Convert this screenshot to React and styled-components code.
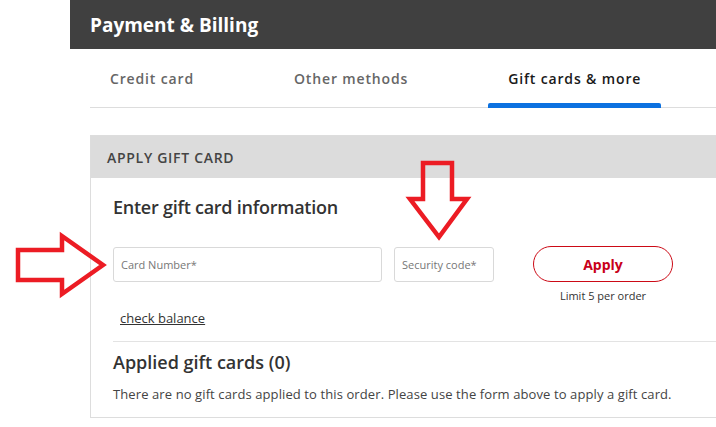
import styled, { createGlobalStyle } from "styled-components";

const GlobalStyle = createGlobalStyle`
  html, body {
    margin: 0;
    padding: 0;
    background: #ffffff;
    overflow: hidden;
  }
  body {
    font-family: "Open Sans", "Noto Sans", sans-serif;
    color: #333333;
  }
`;

const Page = styled.div`
  position: relative;
  padding-left: 70px;
  width: 646px;
  overflow: hidden;
`;

const Header = styled.header`
  height: 49px;
  background: #404040;
  display: flex;
  align-items: center;
  padding-left: 20px;
`;

const Title = styled.h1`
  margin: 0;
  font-size: 19px;
  font-weight: 700;
  color: #ffffff;
`;

const Main = styled.main`
  padding-left: 20px;
`;

const Tabs = styled.nav`
  display: flex;
  gap: 60px;
  height: 58px;
  border-bottom: 1px solid #dddddd;
`;

const Tab = styled.div`
  display: flex;
  align-items: center;
  justify-content: center;
  padding: 0 20px;
  font-size: 14px;
  font-weight: 600;
  letter-spacing: 0.85px;
  color: ${(p) => (p.$active ? "#1a1a1a" : "#666666")};
  position: relative;

  &::after {
    content: "";
    display: ${(p) => (p.$active ? "block" : "none")};
    position: absolute;
    left: 0;
    right: 0;
    bottom: -1px;
    height: 5px;
    border-radius: 2px 2px 0 0;
    background: #0c71e0;
  }
`;

const Panel = styled.section`
  margin-top: 27px;
  border: 1px solid #dddddd;
  width: 680px;
`;

const PanelHeader = styled.div`
  height: 42px;
  background: #dcdcdc;
  display: flex;
  align-items: center;
  padding-left: 16px;
  font-size: 14px;
  font-weight: 600;
  letter-spacing: 0.7px;
  color: #444444;
`;

const PanelBody = styled.div`
  padding: 17px 0 14px 22px;
`;

const Heading = styled.h2`
  margin: 0;
  font-size: 18px;
  font-weight: 600;
  color: #333333;
  line-height: 24px;
  letter-spacing: -0.25px;
`;

const FormRow = styled.div`
  display: flex;
  align-items: flex-start;
  margin-top: 28px;
`;

const Input = styled.input`
  box-sizing: border-box;
  width: ${(p) => p.$width}px;
  height: 35px;
  margin-right: 12px;
  border: 1px solid #d9d9d9;
  border-radius: 3px;
  padding: 0 7px;
  font-family: inherit;
  font-size: 11px;
  color: #333333;
  outline: none;

  &::placeholder {
    color: #777777;
  }
`;

const ApplyGroup = styled.div`
  display: flex;
  flex-direction: column;
  align-items: center;
  margin-left: 27px;
  margin-top: -1px;
`;

const ApplyButton = styled.button`
  box-sizing: border-box;
  width: 140px;
  height: 36px;
  border: 1.5px solid #cc0a16;
  border-radius: 18px;
  background: #ffffff;
  color: #c8001a;
  font-family: inherit;
  font-size: 14px;
  font-weight: 700;
  cursor: pointer;
`;

const Limit = styled.span`
  margin-top: 6px;
  font-size: 11px;
  color: #333333;
`;

const BalanceLink = styled.a`
  display: inline-block;
  margin: 6px 0 0 7px;
  font-size: 13px;
  color: #333333;
  text-decoration: underline;
  cursor: pointer;
`;

const Divider = styled.hr`
  margin: 13px 0 0;
  border: 0;
  border-top: 1px solid #e3e3e3;
`;

const SubHeading = styled(Heading)`
  margin-top: 8px;
  letter-spacing: 0;
`;

const Note = styled.p`
  margin: 11px 0 0;
  font-size: 13px;
  letter-spacing: 0.1px;
  color: #444444;
  line-height: 18px;
`;

const Annotation = styled.svg`
  position: absolute;
  left: ${(p) => p.$x}px;
  top: ${(p) => p.$y}px;
  pointer-events: none;
`;

export default function App() {
  return (
    <>
      <GlobalStyle />
      <Page>
        <Header>
          <Title>Payment &amp; Billing</Title>
        </Header>
        <Main>
          <Tabs>
            <Tab>Credit card</Tab>
            <Tab>Other methods</Tab>
            <Tab $active>Gift cards &amp; more</Tab>
          </Tabs>
          <Panel>
            <PanelHeader>APPLY GIFT CARD</PanelHeader>
            <PanelBody>
              <Heading>Enter gift card information</Heading>
              <FormRow>
                <Input $width={269} placeholder="Card Number*" />
                <Input $width={100} placeholder="Security code*" />
                <ApplyGroup>
                  <ApplyButton>Apply</ApplyButton>
                  <Limit>Limit 5 per order</Limit>
                </ApplyGroup>
              </FormRow>
              <BalanceLink>check balance</BalanceLink>
              <Divider />
              <SubHeading>Applied gift cards (0)</SubHeading>
              <Note>
                There are no gift cards applied to this order. Please use the form above to apply a gift card.
              </Note>
            </PanelBody>
          </Panel>
        </Main>
      </Page>

      <Annotation $x={12} $y={231} width="96" height="70" viewBox="0 0 96 70">
        <polygon
          points="6,19 50,19 50,5 91,34 50,63 50,49 6,49"
          fill="none"
          stroke="#ec1c24"
          strokeWidth="4.5"
          strokeLinejoin="miter"
        />
      </Annotation>
      <Annotation $x={404} $y={157} width="70" height="86" viewBox="0 0 70 86">
        <polygon
          points="19,6 48,6 48,42 63,42 35,80 6,42 19,42"
          fill="none"
          stroke="#ec1c24"
          strokeWidth="4.5"
          strokeLinejoin="miter"
        />
      </Annotation>
    </>
  );
}
